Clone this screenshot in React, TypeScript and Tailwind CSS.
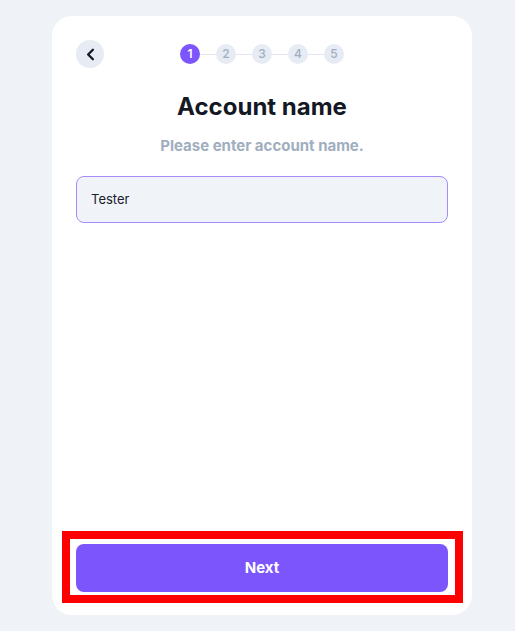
import React, { useState } from 'react';
import { ChevronLeft } from 'lucide-react';

const steps = [1, 2, 3, 4, 5];

const App: React.FC = () => {
  const [name, setName] = useState('Tester');
  const current = 1;

  return (
    <div
      className="min-h-[631px] w-full bg-[#eff2f7] pt-4 pb-4"
      style={{ fontFamily: 'Inter, "Noto Sans", sans-serif' }}
    >
      <div className="ml-[52px] flex h-[599px] w-[420px] flex-col rounded-[20px] bg-white px-6 pt-6 pb-[23px]">
        {/* header */}
        <div className="grid grid-cols-[28px_1fr_28px] items-center">
          <button className="flex h-7 w-7 items-center justify-center rounded-full bg-[#e6ebf4] text-[#111827]">
            <ChevronLeft size={19} strokeWidth={3} />
          </button>
          <div className="flex items-center justify-center">
            {steps.map((s, i) => (
              <React.Fragment key={s}>
                {i > 0 && <div className="h-px w-4 bg-[#e3e8f1]" />}
                <div
                  className={
                    s === current
                      ? 'flex h-5 w-5 items-center justify-center rounded-full bg-[#7c55fc] text-[12px] font-semibold text-white'
                      : 'flex h-5 w-5 items-center justify-center rounded-full bg-[#e6ebf4] text-[12px] font-medium text-[#a0aec0]'
                  }
                >
                  {s}
                </div>
              </React.Fragment>
            ))}
          </div>
          <div />
        </div>

        <h1 className="mt-[25px] text-center text-[24px] font-bold leading-7 text-[#141824]">Account name</h1>
        <p className="mt-[14px] text-center text-[15px] font-bold text-[#a0aec0]">Please enter account name.</p>

        <input
          value={name}
          onChange={(e) => setName(e.target.value)}
          className="mt-[18px] h-[47px] w-full rounded-lg border border-[#a78bfa] bg-[#f0f3f8] px-[14px] text-[13px] text-[#1a202c] outline-none"
        />

        <div className="flex-1" />

        <div className="relative">
          <button className="h-12 w-full rounded-lg bg-[#7c55fc] text-[15px] font-bold text-white">Next</button>
          {/* highlight frame */}
          <div className="pointer-events-none absolute -top-[13px] -bottom-[11px] -left-[14px] -right-[15px] border-8 border-[#ff0000]" />
        </div>
      </div>
    </div>
  );
};

export default App;
